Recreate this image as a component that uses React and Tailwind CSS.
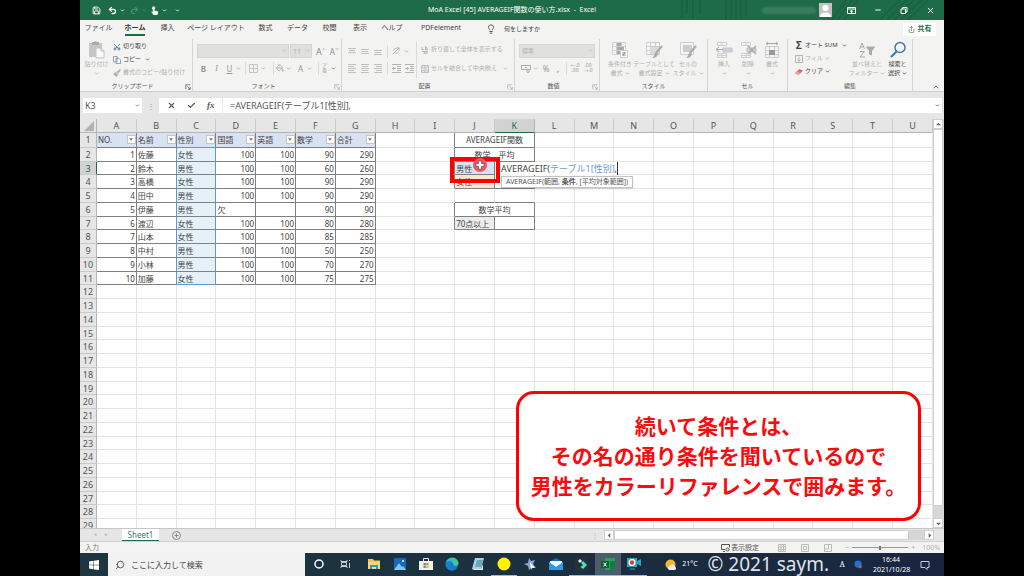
import React, { useState } from 'react';
import {
  Check,
  ChevronDown,
  ChevronUp,
  Lightbulb,
  Minus,
  PaintBucket,
  Redo2,
  Save,
  Scissors,
  Search,
  Share,
  Undo2,
  X,
} from 'lucide-react';

const TABS = [
  { label: 'ファイル', width: 'w-[37px]' },
  { label: 'ホーム', width: 'w-[36px]', active: true },
  { label: '挿入', width: 'w-[29px]' },
  { label: 'ページ レイアウト', width: 'w-[68px]' },
  { label: '数式', width: 'w-[31px]' },
  { label: 'データ', width: 'w-[33px]' },
  { label: '校閲', width: 'w-[31px]' },
  { label: '表示', width: 'w-[30px]' },
  { label: 'ヘルプ', width: 'w-[34px]' },
  { label: 'PDFelement', width: 'w-[64px]' },
];

const COLUMNS = 'ABCDEFGHIJKLMNOPQRSTU'.split('');
const HEADERS = ['NO.', '名前', '性別', '国語', '英語', '数学', '合計'];
const STUDENTS = [
  [1, '佐藤', '女性', 100, 100, 90, 290],
  [2, '鈴木', '男性', 100, 100, 60, 260],
  [3, '高橋', '女性', 100, 100, 90, 290],
  [4, '田中', '男性', 100, 100, 90, 290],
  [5, '伊藤', '男性', '欠', '', 90, 90],
  [6, '渡辺', '女性', 100, 100, 80, 280],
  [7, '山本', '女性', 100, 100, 85, 285],
  [8, '中村', '男性', 100, 100, 50, 250],
  [9, '小林', '男性', 100, 100, 70, 270],
  [10, '加藤', '女性', 100, 100, 75, 275],
];
const ROW_COUNT = 29;

const Caret = ({ className = 'text-[#aaa]' }) => (
  <ChevronDown className={`w-[5px] h-[5px] shrink-0 ${className}`} strokeWidth={4} />
);

const Launcher = ({ className = 'text-[#aaa]' }) => (
  <svg viewBox="0 0 8 8" className={`w-[6px] h-[6px] ${className}`} fill="none" stroke="currentColor">
    <path d="M1 7V1h6M3 3l4 4M7 4v3H4" />
  </svg>
);

const Divider = () => <div className="w-px h-[13px] bg-[#dadada] shrink-0" />;

const Group = ({ width, label, launcher, launcherColor, children }) => (
  <section className={`${width} shrink-0 flex flex-col border-r border-[#d5d5d5] mt-px`}>
    <div className="flex-1 min-h-0">{children}</div>
    <div className="h-[9px] flex items-center text-[6px] text-[#555]">
      <span className="flex-1 text-center">{label}</span>
      {launcher && (
        <button aria-label={`${label} の設定`} className="pr-px">
          <Launcher className={launcherColor} />
        </button>
      )}
    </div>
  </section>
);

const BigButton = ({ icon, lines, caret = true, width = 'w-[34px]', color = 'text-[#b0b0b0]' }) => (
  <button className={`${width} shrink-0 flex flex-col items-center text-[6px] leading-[9px] ${color}`}>
    {icon}
    <span className="mt-px whitespace-nowrap">{lines[0]}</span>
    <span className="flex items-center h-[9px] whitespace-nowrap">
      {lines[1]}
      {caret && <Caret className={lines[1] ? `ml-[2px] ${color}` : color} />}
    </span>
  </button>
);

const Lines = ({ rows }) => (
  <svg viewBox="0 0 9 9" className="w-[9px] h-[9px]" stroke="#c0c0c0">
    {rows.map(([x, y, w]) => (
      <path key={y} d={`M${x} ${y}h${w}`} />
    ))}
  </svg>
);

const PasteIcon = () => (
  <svg viewBox="0 0 17 18" className="w-[17px] h-[18px]">
    <path d="M1 2h13v14H1z" fill="#c9c6c9" />
    <path d="M4 1h2a2 2 0 0 1 3 0h2v3H4z" fill="#aaa" />
    <path d="M8 7h5l3 3v7H8z" fill="#fafafa" stroke="#c4c1c8" />
    <path d="M13 7v3h3" fill="none" stroke="#c4c1c8" />
  </svg>
);

const TableIcon = ({ variant }) => (
  <svg viewBox="0 0 18 18" className="w-[18px] h-[18px]" fill="none" stroke="#cfccd2">
    <path d="M1.500 1.500h13v12h-13zM1.500 5.500h13M1.500 9.500h13M5.500 1.500v12M10.500 1.500v12" fill="#f7f5f7" />
    {variant === 'cond' && (
      <>
        <path d="M6 2h4v3H6zM6 6h7v3H6zM6 10h3v3H6z" fill="#aaa7aa" stroke="none" />
        <path d="M9.500 9.500h7v7h-7z" fill="#fff" />
        <path d="M11 12h4M11 14h4M14 11l-2 4" stroke="#999" />
      </>
    )}
    {variant === 'table' && (
      <>
        <path d="M5 6h9v7H5z" fill="#dcd9dd" stroke="none" />
        <path d="M17 5l-6 7" stroke="#aaa" strokeWidth="2" />
        <path d="M11 11l2 2c-1 3-3 4-6 4 2-1 2-4 4-6z" fill="#aaa" stroke="none" />
      </>
    )}
    {variant === 'style' && (
      <>
        <path d="M2 2h12v11H2z" fill="#f7f5f7" stroke="none" />
        <path d="M4 4h9v7H4z" fill="#cfccd0" stroke="none" />
        <path d="M17 5l-6 7" stroke="#aaa" strokeWidth="2" />
        <path d="M11 11l2 2c-1 3-3 4-6 4 2-1 2-4 4-6z" fill="#aaa" stroke="none" />
      </>
    )}
  </svg>
);

const CellsIcon = ({ variant }) => (
  <svg viewBox="0 0 18 18" className="w-[18px] h-[18px]" fill="none" stroke="#cfccd2">
    {variant === 'format' ? (
      <>
        <path d="M2.500 5.500h13v11h-13zM2.500 9.500h13M2.500 13.500h13M6.500 5.500v11M11.500 5.500v11" />
        <path d="M6 9h6v5H6z" fill="#999" stroke="none" />
        <path d="M3 2.500h12M5 1L3 2.500 5 4M13 1l2 1.500L13 4" stroke="#aaa" />
      </>
    ) : (
      <>
        <path d="M2.500 1.500h9v3h-9zM7 1.500v3M2.500 12.500h9v4h-9zM7 12.500v4M2.500 14.500h9" />
        <path d="M8 7h9v4H8z" fill="#d3d0d5" stroke="#c4c0c8" />
        {variant === 'insert' && <path d="M8 8.500H1M4 6L1 8.500 4 11" stroke="#aaa" />}
        {variant === 'delete' && <path d="M9 5l8 8M17 5l-8 8" stroke="#aaa" strokeWidth="1.500" />}
      </>
    )}
  </svg>
);

const TitleBar = () => (
  <header className="relative h-5 shrink-0 bg-[#1e6b47] text-white grid grid-cols-[1fr_auto_1fr] items-center">
    <svg viewBox="0 0 300 20" className="absolute right-0 top-0 h-5 w-[300px]" stroke="#1a6341" strokeWidth="2" fill="none">
      <path d="M38 0v18M43 0v14M49 0v18M56 0v14M82 0v20M87 0v20M92 0v20M97 0v20M102 0v16" />
      <path d="M188 20l14-20M194 20l14-20M200 20l14-20M236 20l20-20M243 20l20-20M250 20l20-20M257 20l20-20M264 20l20-20" />
    </svg>
    <div className="flex items-center gap-[3px] pl-[12px]">
      <button aria-label="上書き保存" className="mr-[4px]">
        <Save className="w-[9px] h-[9px]" strokeWidth={2.5} />
      </button>
      <button aria-label="元に戻す">
        <Undo2 className="w-[9px] h-[9px]" strokeWidth={3.5} />
      </button>
      <Caret className="text-white mr-[2px]" />
      <button aria-label="やり直し">
        <Redo2 className="w-[9px] h-[9px] text-[#4c8f70]" strokeWidth={3} />
      </button>
      <Caret className="text-[#4c8f70]" />
      <button aria-label="タッチ/マウス モード">
        <svg viewBox="0 0 10 10" className="w-[9px] h-[9px]" fill="currentColor">
          <circle cx="4" cy="2.300" r="2" opacity=".8" />
          <path d="M3 2h2v3l4 1v2L8 10H4L1 6l2 1z" />
        </svg>
      </button>
      <Caret className="text-white" />
      <Caret className="text-white ml-[5px]" />
    </div>
    <h1 className="text-[7px] leading-[10px] whitespace-pre">MoA Excel [45] AVERAGEIF関数の使い方.xlsx  -  Excel</h1>
    <div className="relative flex items-center justify-end pr-[9px]">
      <div className="w-[54px] h-[7px] rounded-sm bg-[#4d8a6c] opacity-60 blur-[1px]" />
      <svg viewBox="0 0 13 14" className="w-[13px] h-[14px] ml-[3px] mr-[15px]">
        <path d="M0 0h13v14H0z" fill="#c3c3c3" />
        <circle cx="6.500" cy="5" r="3" fill="#fff" />
        <path d="M1 14c0-6 11-6 11 0z" fill="#fff" />
      </svg>
      <button aria-label="リボンの表示オプション" className="mr-[18px]">
        <svg viewBox="0 0 9 9" className="w-[9px] h-[9px]" fill="none" stroke="#fff">
          <path d="M.5 1.500h8v6h-8zM.5 3h8M4.500 7V4.500M3 5.500l1.500-1 1.500 1" />
        </svg>
      </button>
      <button aria-label="最小化" className="mr-[18px]">
        <Minus className="w-[8px] h-[8px]" strokeWidth={3} />
      </button>
      <button aria-label="元のサイズに戻す" className="mr-[18px]">
        <svg viewBox="0 0 8 8" className="w-[8px] h-[8px]" fill="none" stroke="#fff">
          <path d="M1 3h4.500v4.500H1zM2.500 3V1.500h4.500V6H5.500" />
        </svg>
      </button>
      <button aria-label="閉じる">
        <X className="w-[9px] h-[9px]" strokeWidth={2.5} />
      </button>
    </div>
  </header>
);

const TabBar = () => (
  <nav className="h-[18px] shrink-0 flex items-center text-[7px] leading-[10px] text-[#444] pr-[8px]">
    {TABS.map((tab) => (
      <button key={tab.label} className={`${tab.width} h-full shrink-0 flex flex-col items-center justify-end pb-[2px]`}>
        <span className={`whitespace-nowrap ${tab.active ? 'font-bold text-[#333]' : ''}`}>{tab.label}</span>
        <span className={`mt-px w-[20px] h-[2px] ${tab.active ? 'bg-[#1e6b47]' : 'bg-transparent'}`} />
      </button>
    ))}
    <Lightbulb className="w-[10px] h-[10px] ml-[13px]" strokeWidth={2} />
    <button className="ml-[8px] text-[6px]">何をしますか</button>
    <button className="ml-auto h-[13px] w-[33px] bg-white flex items-center justify-center gap-[3px] font-bold text-[#1e6b47]">
      <Share className="w-[7px] h-[7px]" strokeWidth={2} />
      共有
    </button>
  </nav>
);

const Ribbon = () => (
  <div className="h-[54px] shrink-0 flex text-[6px] leading-[9px] text-[#b0b0b0] border-b border-[#cfcfcf]">
    <Group width="w-[113px]" label="クリップボード" launcher launcherColor="text-[#555]">
      <div className="flex pt-[2px]">
        <BigButton icon={<PasteIcon />} lines={['貼り付け', '']} width="w-[33px]" />
        <div className="flex flex-col items-start gap-[4px] pt-px">
          <button className="flex items-center gap-[2px] text-[#444]">
            <Scissors className="w-[8px] h-[8px] -rotate-90 text-[#47759c]" strokeWidth={2.5} />
            切り取り
          </button>
          <button className="flex items-center gap-[2px] text-[#444]">
            <svg viewBox="0 0 9 9" className="w-[8px] h-[8px]" fill="#fff" stroke="#7c8fa3">
              <path d="M.5.500h4v6h-4zM3.500 2.500h3l2 2v4h-5z" />
            </svg>
            コピー
            <Caret className="text-[#555] ml-[2px]" />
          </button>
          <button className="flex items-center gap-[2px] whitespace-nowrap">
            <svg viewBox="0 0 9 9" className="w-[8px] h-[8px]" fill="#b4b4b4">
              <path d="M8 0l1 1-3 4-2-2zM3 3l3 3-2 3-4-3z" />
            </svg>
            書式のコピー/貼り付け
          </button>
        </div>
      </div>
    </Group>

    <Group width="w-[149px]" label="フォント" launcher>
      <div className="flex items-center pl-[4px] pt-[5px] gap-px">
        <div className="relative w-[92px]">
          <select aria-label="フォント" className="appearance-none w-full h-[14px] bg-[#e1e0dc] border border-[#d6d5d1] block">
            <option></option>
          </select>
          <Caret className="absolute right-[2px] top-[4px] text-[#b8b8b8]" />
        </div>
        <div className="relative w-[22px]">
          <select aria-label="フォント サイズ" className="appearance-none w-full h-[14px] pl-[2px] bg-[#e1e0dc] border border-[#d6d5d1] text-[7px] block" defaultValue="11">
            <option>11</option>
          </select>
          <Caret className="absolute right-[2px] top-[4px] text-[#b8b8b8]" />
        </div>
        <button aria-label="フォント サイズの拡大" className="ml-[3px] flex text-[9px] text-[#8d8d8d]">
          A<ChevronUp className="w-[4px] h-[4px]" strokeWidth={4} />
        </button>
        <button aria-label="フォント サイズの縮小" className="ml-[3px] flex text-[8px] text-[#8d8d8d]">
          A<ChevronDown className="w-[4px] h-[4px]" strokeWidth={4} />
        </button>
      </div>
      <div className="flex items-center pl-[7px] pt-[3px] text-[8px] text-[#999] h-[17px]">
        <button className="w-[7px] font-bold">B</button>
        <button className="w-[7px] ml-[6px] italic font-serif">I</button>
        <button className="w-[7px] ml-[6px] mr-[3px] underline">U</button>
        <Caret />
        <div className="w-[4px]" />
        <Divider />
        <svg viewBox="0 0 9 9" className="w-[9px] h-[9px] mx-[3px]" fill="none" stroke="#c5c2c8">
          <path d="M.5.500h8v8h-8zM4.500.500v8M.5 4.500h8" />
        </svg>
        <Caret />
        <div className="w-[7px]" />
        <Divider />
        <PaintBucket className="w-[8px] h-[8px] mx-[2px]" strokeWidth={2} />
        <Caret />
        <button className="w-[7px] ml-[6px] mr-[3px]">A</button>
        <Caret />
        <div className="w-[6px]" />
        <Divider />
        <button className="ml-[3px] mr-[4px] text-[5px] leading-[5px] w-[5px]">ア亜</button>
        <Caret className="text-[#666]" />
      </div>
    </Group>

    <Group width="w-[173px]" label="配置" launcher>
      <div className="flex h-full">
        <div className="flex flex-col w-[73px]">
          <div className="flex items-center gap-[4px] pl-[6px] pt-[5px] h-[19px]">
            <Lines rows={[[0, 1.5, 8], [1, 3.5, 6], [0, 5.5, 8]]} />
            <Lines rows={[[0, 2.5, 8], [1, 4.5, 6], [0, 6.5, 8]]} />
            <Lines rows={[[0, 3.5, 8], [1, 5.5, 6], [0, 7.5, 8]]} />
            <Divider />
            <svg viewBox="0 0 9 9" className="w-[8px] h-[8px]" fill="none" stroke="#aaa">
              <path d="M1 8l7-7M2 4a2 2 0 0 1 3-2M4 7a2 2 0 0 0 3-2M5 1h3v3" />
            </svg>
            <Caret />
          </div>
          <div className="flex items-center gap-[4px] pl-[6px] pt-[3px] h-[17px]">
            <Lines rows={[[0, 0.5, 8], [0, 2.5, 6], [0, 4.5, 8], [0, 6.5, 6], [0, 8.5, 8]]} />
            <Lines rows={[[0, 0.5, 8], [1, 2.5, 6], [0, 4.5, 8], [1, 6.5, 6], [0, 8.5, 8]]} />
            <Lines rows={[[0, 0.5, 8], [2, 2.5, 6], [0, 4.5, 8], [2, 6.5, 6], [0, 8.5, 8]]} />
            <Divider />
            <svg viewBox="0 0 9 9" className="w-[9px] h-[9px] shrink-0" fill="none" stroke="#b4b4b4">
              <path d="M0 .500h9M5 2.500h4M5 4.500h4M5 6.500h4M0 8.500h9M4 4.500H0M2 3L.500 4.500 2 6" />
            </svg>
            <svg viewBox="0 0 9 9" className="w-[9px] h-[9px] shrink-0" fill="none" stroke="#b4b4b4">
              <path d="M0 .500h9M5 2.500h4M5 4.500h4M5 6.500h4M0 8.500h9M0 4.500h4M2 3l1.500 1.500L2 6" />
            </svg>
          </div>
        </div>
        <div className="flex flex-col gap-[10px] border-l border-[#dadada] ml-px mt-[3px] mb-[4px] pl-[4px] pt-[3px] whitespace-nowrap">
          <button className="flex items-center gap-[2px]">
            <svg viewBox="0 0 9 9" className="w-[8px] h-[8px]" fill="none" stroke="#aaa">
              <path d="M1 1v3h2M5 0v4h2V2H5M1 6h6v2H3M4 7L3 8l1 1" />
            </svg>
            折り返して全体を表示する
          </button>
          <button className="flex items-center gap-[2px]">
            <svg viewBox="0 0 9 9" className="w-[8px] h-[8px]" fill="none" stroke="#b9b6c0">
              <path d="M.5.500h8v8h-8zM.5 2.500h8M.5 6.500h8M4.500.500v2M4.500 6.500v2M2 4.500h5" />
            </svg>
            セルを結合して中央揃え
            <Caret className="ml-[4px]" />
          </button>
        </div>
      </div>
    </Group>

    <Group width="w-[85px]" label="数値" launcher>
      <div className="relative mx-[4px] pt-[5px]">
        <select aria-label="表示形式" className="appearance-none w-full h-[14px] pl-[2px] bg-[#e1e0dc] border border-[#d6d5d1] block">
          <option>標準</option>
        </select>
        <Caret className="absolute right-[2px] top-[9px] text-[#b8b8b8]" />
      </div>
      <div className="flex items-center pl-[6px] pt-[3px] h-[17px] text-[8px] text-[#999]">
        <svg viewBox="0 0 10 9" className="w-[10px] h-[9px] mr-[2px]" fill="none" stroke="#aaa">
          <path d="M.5 1.500h9v4h-9zM4 3.500h2M5 7h4M6 8.500h2" />
        </svg>
        <Caret />
        <button className="ml-[4px] w-[8px]">%</button>
        <button className="ml-[6px] mr-[6px] w-[4px] font-bold">,</button>
        <Divider />
        <button aria-label="小数点以下の表示桁数を増やす" className="ml-[3px] text-[5px] leading-[5px] w-[10px]">←.0 .00</button>
        <button aria-label="小数点以下の表示桁数を減らす" className="ml-[3px] text-[5px] leading-[5px] w-[10px]">.00 →.0</button>
      </div>
    </Group>

    <Group width="w-[108px]" label="スタイル">
      <div className="flex pt-[2px] pl-[3px]">
        <BigButton icon={<TableIcon variant="cond" />} lines={['条件付き', '書式']} />
        <BigButton icon={<TableIcon variant="table" />} lines={['テーブルとして', '書式設定']} />
        <BigButton icon={<TableIcon variant="style" />} lines={['セルの', 'スタイル']} />
      </div>
    </Group>

    <Group width="w-[80px]" label="セル">
      <div className="flex pt-[2px] pl-[4px]">
        <BigButton width="w-[24px]" icon={<CellsIcon variant="insert" />} lines={['挿入', '']} />
        <BigButton width="w-[24px]" icon={<CellsIcon variant="delete" />} lines={['削除', '']} />
        <BigButton width="w-[24px]" icon={<CellsIcon variant="format" />} lines={['書式', '']} />
      </div>
    </Group>

    <Group width="w-[125px]" label="編集">
      <div className="flex pt-[2px]">
        <div className="w-[63px] pl-[7px] flex flex-col items-start gap-[4px] whitespace-nowrap">
          <button className="flex items-center gap-[2px] text-[#444]">
            <b className="text-[10px] w-[8px]">Σ</b>
            オート SUM
            <Caret className="text-[#555] ml-[2px]" />
          </button>
          <button className="flex items-center gap-[2px]">
            <svg viewBox="0 0 9 9" className="w-[8px] h-[8px]" fill="none" stroke="#aaa">
              <path d="M.5.500h8v8h-8zM4.500 2v5M2.500 5l2 2 2-2" />
            </svg>
            フィル
            <Caret />
          </button>
          <button className="flex items-center gap-[2px] text-[#444]">
            <svg viewBox="0 0 9 9" className="w-[8px] h-[8px]">
              <path d="M5 1l4 2-5 5-4-2z" fill="#e2686b" />
              <path d="M0 6l4 2 2-2-4-2z" fill="#f0a0a2" />
            </svg>
            クリア
            <Caret className="text-[#555]" />
          </button>
        </div>
        <BigButton
          width="w-[32px]"
          icon={
            <svg viewBox="0 0 18 18" className="w-[18px] h-[18px]" fill="none" stroke="#aaa">
              <path d="M1.500 8l2.500-6 2.500 6M2.500 6h3M2 10.500h4.500L2 16h5" />
              <path d="M8.500 6h8l-3 4v4l-2-1v-3z" fill="#aaa" />
            </svg>
          }
          lines={['並べ替えと', 'フィルター']}
        />
        <BigButton
          width="w-[29px]"
          color="text-[#444]"
          icon={
            <svg viewBox="0 0 18 18" className="w-[18px] h-[18px]" fill="none" stroke="#3d78b5">
              <circle cx="11" cy="6.500" r="5" strokeWidth="1.500" />
              <path d="M7.500 10.500L2 16" strokeWidth="2.200" />
            </svg>
          }
          lines={['検索と', '選択']}
        />
      </div>
    </Group>
    <button aria-label="リボンを折りたたむ" className="flex-1 flex items-end justify-end pr-[4px]">
      <ChevronUp className="w-[8px] h-[8px] text-[#555]" strokeWidth={2} />
    </button>
  </div>
);

const FormulaBar = ({ formula, setFormula }) => (
  <div className="h-[27px] shrink-0 bg-[#e6e6e6] flex items-center pl-[3px] pr-[2px] text-[8px] text-[#555]">
    <div className="w-[59px] h-[15px] bg-white flex items-center pr-[2px]">
      <input aria-label="名前ボックス" defaultValue="K3" className="w-full min-w-0 pl-[2px] text-[9px] outline-none" />
      <Caret className="text-[#777]" />
    </div>
    <span className="w-[17px] text-center text-[#999]">⋮</span>
    <div className="w-[63px] h-[15px] bg-white flex items-center justify-around px-[2px]">
      <button aria-label="キャンセル"><X className="w-[9px] h-[9px]" strokeWidth={3} /></button>
      <button aria-label="入力"><Check className="w-[9px] h-[9px]" strokeWidth={3} /></button>
      <button aria-label="関数の挿入" className="font-['Liberation_Serif',serif] italic font-bold text-[9px]">fx</button>
    </div>
    <div className="flex-1 ml-px h-[15px] bg-white flex items-center pr-[2px]">
      <input
        aria-label="数式バー"
        value={formula}
        onChange={(e) => setFormula(e.target.value)}
        className="flex-1 min-w-0 pl-[7px] text-[9px] outline-none"
      />
      <Caret className="text-[#555]" />
    </div>
  </div>
);

const DARK = 'border-[#808080]';
const LIGHT = 'border-[#e4e4e4]';

const studentCells = (row) =>
  STUDENTS[row - 2].map((value, i) => {
    let look = 'border-b-[#808080] border-r-[#808080]';
    if (i === 1) look = 'border-b-[#808080] border-r-[#5b9bd5]';
    if (i === 2) look = `bg-[#e6f0f9] border-r-[#5b9bd5] ${row === 11 ? 'border-b-[#5b9bd5]' : 'border-b-[#808080]'}`;
    return (
      <td key={i} className={`border-r border-b ${look} ${typeof value === 'number' ? 'text-right pr-px' : 'pl-px'}`}>
        {value}
      </td>
    );
  });

const SummaryCells = ({ row, formula }) => {
  if (row === 1 || row === 2 || row === 6) {
    const text = { 1: 'AVERAGEIF関数', 2: '数学　平均', 6: '数学平均' }[row];
    return <td colSpan={2} className={`border-r border-b text-center ${DARK}`}>{text}</td>;
  }
  if (row === 3) {
    return (
      <>
        <td className={`relative border-r border-b bg-[#dae3f3] pl-px ${DARK}`}>
          男性
          <div className="absolute z-20 -left-[5px] -top-[5px] w-[50px] h-[26px] border-4 border-[#f00]" />
          <svg viewBox="0 0 14 14" className="absolute z-20 left-[18px] -top-[4px] w-[14px] h-[14px]">
            <circle cx="7" cy="7" r="7" fill="#f0585c" />
            <path d="M5.500 3h3v2.500H11v3H8.500V11h-3V8.500H3v-3h2.500z" fill="#fff" stroke="#444" strokeWidth=".6" />
          </svg>
        </td>
        <td className="relative border-r border-b border-[#3f8f68]">
          <div className="absolute z-10 left-0 top-0 h-[13px] bg-white whitespace-nowrap text-[9px] leading-[13px] pl-px border-r border-[#333]">
            {formula.slice(0, 11)}
            <span className="text-[#6f9bd1]">{formula.slice(11, -1)}</span>
            {formula.slice(-1)}
          </div>
          <div className="absolute z-10 left-[6px] top-[14px] h-[12px] px-[4px] bg-white border border-[#c4c4c4] shadow-sm whitespace-nowrap text-[7px] leading-[10px] text-[#555]">
            AVERAGEIF(範囲, <b>条件</b>, [平均対象範囲])
          </div>
        </td>
      </>
    );
  }
  if (row === 4) {
    return (
      <>
        <td className={`border-r border-b bg-[#fbe5d6] pl-px ${DARK}`}>女性</td>
        <td className={`border-r border-b ${DARK}`} />
      </>
    );
  }
  if (row === 7) {
    return (
      <>
        <td className={`border-r border-b bg-[#ededed] pl-px whitespace-nowrap ${DARK}`}>70点以上</td>
        <td className={`border-r border-b ${DARK}`} />
      </>
    );
  }
  const bottom = row === 5 ? 'border-b-[#808080] border-r-[#e4e4e4]' : LIGHT;
  return (
    <>
      <td className={`border-r border-b ${bottom}`} />
      <td className={`border-r border-b ${bottom}`} />
    </>
  );
};

const Sheet = ({ formula }) => (
  <table className="w-full h-[414px] table-fixed border-separate border-spacing-0 text-[8px] leading-[11px] text-[#444]">
    <thead>
      <tr className="h-[14px] bg-[#e6e6e6] text-[9px] text-[#555]">
        <th className="w-[17px] border-r border-b border-[#b5b5b5] p-0">
          <svg viewBox="0 0 16 13" className="w-[16px] h-[13px] block">
            <path d="M14 2v10H4z" fill="#b3b3b3" />
          </svg>
        </th>
        {COLUMNS.map((col) => (
          <th
            key={col}
            scope="col"
            className={`font-normal border-r border-b ${
              col === 'K' ? 'bg-[#d2d2d2] text-[#1e6b47] border-r-[#b5b5b5] border-b-[#1e6b47]' : 'border-r-[#cacaca] border-b-[#b5b5b5]'
            }`}
          >
            {col}
          </th>
        ))}
      </tr>
    </thead>
    <tbody>
      {Array.from({ length: ROW_COUNT }, (_, i) => i + 1).map((row) => (
        <tr key={row}>
          <th
            scope="row"
            className={`font-normal text-[9px] border-r border-b ${
              row === 3 ? 'bg-[#d2d2d2] text-[#1e6b47] border-b-[#cacaca] border-r-[#1e6b47]' : 'bg-[#e6e6e6] text-[#555] border-b-[#cacaca] border-r-[#b5b5b5]'
            }`}
          >
            {row}
          </th>
          {row === 1 &&
            HEADERS.map((name, i) => (
              <td key={name} className={`border-r border-b bg-[#d9e2f3] pl-px ${i === 2 ? 'border-r-[#808080] border-b-[#5b9bd5]' : DARK}`}>
                <div className="flex items-center justify-between h-[12px]">
                  {name}
                  <button aria-label={`${name} フィルター`} className="w-[9px] h-[9px] bg-white border border-[#c6c6c6] flex items-center justify-center">
                    <svg viewBox="0 0 5 3" className="w-[4px] h-[3px]"><path d="M0 0h5L2.500 3z" fill="#777" /></svg>
                  </button>
                </div>
              </td>
            ))}
          {row >= 2 && row <= 11 && studentCells(row)}
          {row > 11 && HEADERS.map((name) => <td key={name} className={`border-r border-b ${LIGHT}`} />)}
          <td className={`border-r border-b ${LIGHT}`} />
          <td
            className={`border-r border-b ${
              row <= 4 || row === 6 || row === 7 ? 'border-r-[#808080] border-b-[#e4e4e4]' : LIGHT
            }`}
          />
          <SummaryCells row={row} formula={formula} />
          {COLUMNS.slice(11).map((col) => (
            <td key={col} className={`border-r border-b ${LIGHT}`} />
          ))}
        </tr>
      ))}
    </tbody>
  </table>
);

const ScrollArrow = ({ label, d }) => (
  <button aria-label={label} className="w-[10px] h-[10px] shrink-0 bg-white border border-[#cfcfcf] flex items-center justify-center">
    <svg viewBox="0 0 6 6" className="w-[5px] h-[5px]"><path d={d} fill="#666" /></svg>
  </button>
);

const SheetTabs = () => (
  <div className="h-[13px] shrink-0 bg-[#e6e6e6] border-t border-[#c6c6c6] flex items-center text-[#b0b0b0]">
    <span className="w-[42px] flex justify-center gap-[8px] text-[5px]">
      <button aria-label="前のシート">◂</button>
      <button aria-label="次のシート">▸</button>
    </span>
    <button className="w-[37px] h-[12px] self-start bg-white border-b border-[#1e6b47] text-[8px] leading-[10px] text-[#3c7d5e]">Sheet1</button>
    <button aria-label="新しいシート" className="ml-[13px]">
      <svg viewBox="0 0 9 9" className="w-[9px] h-[9px] block" fill="none" stroke="#888">
        <circle cx="4.500" cy="4.500" r="4" />
        <path d="M4.500 2.500v4M2.500 4.500h4" />
      </svg>
    </button>
    <span className="ml-auto mr-[5px] text-[8px] leading-[10px]">⋮</span>
    <div className="flex w-[330px]">
      <ScrollArrow label="左へ" d="M4 0v6L1 3z" />
      <div className="flex-1 flex bg-[#d6d6d6]">
        <div className="w-[95%] h-[10px] bg-white border border-[#cfcfcf]" />
      </div>
      <ScrollArrow label="右へ" d="M2 0v6l3-3z" />
    </div>
    <div className="w-[10px]" />
  </div>
);

const StatusBar = ({ zoom, setZoom }) => (
  <footer className="h-[12px] shrink-0 bg-[#f3f3f1] border-t border-[#d0d0d0] flex items-center text-[7px] leading-[10px] text-[#777] pl-[5px] pr-[4px]">
    <span>入力</span>
    <button className="ml-auto flex items-center gap-px text-[#555] mr-[19px]">
      <svg viewBox="0 0 9 8" className="w-[9px] h-[8px]" fill="none" stroke="currentColor">
        <path d="M4 5.500H.500v-5h8v3M2 7.500h2" />
        <circle cx="6.500" cy="5.500" r="1.500" />
      </svg>
      表示設定
    </button>
    <svg viewBox="0 0 8 8" className="w-[8px] h-[8px] mr-[15px]" fill="none" stroke="#bbb">
      <path d="M.5.500h7v7h-7zM3 .500v7M5.500.500v7M.5 3h7M.5 5.500h7" />
    </svg>
    <svg viewBox="0 0 8 8" className="w-[8px] h-[8px] mr-[15px]" fill="none" stroke="#bbb">
      <path d="M.5.500h7v7h-7zM2.500 2.500h3v3h-3z" />
    </svg>
    <svg viewBox="0 0 8 8" className="w-[8px] h-[8px] mr-[13px]" fill="none" stroke="#bbb">
      <path d="M.5.500h7v7h-7zM.5 5h4V.500" />
    </svg>
    <span className="text-[#aaa]">−</span>
    <input
      type="range"
      aria-label="ズーム"
      min="0"
      max="200"
      value={zoom}
      onChange={(e) => setZoom(e.target.value)}
      className="appearance-none w-[56px] h-px mx-[3px] bg-[#999] [&::-webkit-slider-thumb]:appearance-none [&::-webkit-slider-thumb]:w-[2px] [&::-webkit-slider-thumb]:h-[4px] [&::-webkit-slider-thumb]:bg-[#777]"
    />
    <span className="text-[#aaa]">+</span>
    <span className="ml-[7px] text-[#b5b5b5]">{zoom}%</span>
  </footer>
);

const TaskIcon = ({ label, open, active, children }) => (
  <button
    aria-label={label}
    className={`w-[26px] h-full shrink-0 flex items-center justify-center border-b ${open ? 'border-[#8fc0e0]' : 'border-transparent'} ${active ? 'bg-[#4d5d6a]' : ''}`}
  >
    <svg viewBox="0 0 14 14" className="w-[14px] h-[14px]">{children}</svg>
  </button>
);

const Taskbar = () => (
  <div className="relative h-[23px] shrink-0 flex items-center bg-linear-to-r from-[#1d3641] via-[#1c303f] to-[#192540] text-white">
    <button aria-label="スタート" className="w-[28px] flex justify-center">
      <svg viewBox="0 0 10 10" className="w-[10px] h-[10px]" fill="#fff">
        <path d="M0 1.500l4.500-.700v4H0zM5 .700L10 0v4.800H5zM0 5.300h4.500v4L0 8.600zM5 5.300h5V10L5 9.400z" />
      </svg>
    </button>
    <label className="w-[197px] h-full bg-[#f2f2f2] flex items-center gap-[6px] pl-[7px] text-[#444]">
      <Search className="w-[10px] h-[10px] -scale-x-100" strokeWidth={2} />
      <input aria-label="検索" placeholder="ここに入力して検索" className="flex-1 min-w-0 outline-none text-[8px] leading-[12px] placeholder:text-[#444]" />
    </label>
    <div className="flex items-center h-full pl-px pr-[3px]">
      <TaskIcon label="Cortana"><circle cx="7" cy="7" r="4" fill="none" stroke="#fff" strokeWidth="1.500" /></TaskIcon>
      <TaskIcon label="タスク ビュー">
        <path d="M3 3v1.500h6V3M3 11V9.500h6V11M3.500 5.500h5v3h-5zM11.500 3v1M11.500 6v5" fill="none" stroke="#c5ccd0" />
      </TaskIcon>
    </div>
    <TaskIcon label="エクスプローラー">
      <path d="M1 2h5l1 1.500h6V12H1z" fill="#f7c64a" />
      <path d="M1 5h12v7H1z" fill="#fbd96f" />
      <path d="M3 12V8h8v4H9v-2H5v2z" fill="#3f8fd6" />
    </TaskIcon>
    <TaskIcon label="フォト">
      <path d="M1 1h12v12H1z" fill="#1668b8" />
      <path d="M1 13l5-7 3 4 1-1 3 4z" fill="#7ec8f2" />
      <circle cx="10" cy="4" r="1" fill="#fff" />
    </TaskIcon>
    <TaskIcon label="Microsoft Store">
      <path d="M4.500 4V1.500h5V4" fill="none" stroke="#e8e8e8" />
      <path d="M0 4h14v9H0z" fill="#f1f1f1" />
      <path d="M4.500 6h2.300v2.300H4.500z" fill="#e5532d" />
      <path d="M7.200 6h2.300v2.300H7.200z" fill="#7db72f" />
      <path d="M4.500 8.700h2.300V11H4.500z" fill="#2f9fe0" />
      <path d="M7.200 8.700h2.300V11H7.200z" fill="#f5b81f" />
    </TaskIcon>
    <TaskIcon label="Edge">
      <circle cx="7" cy="7" r="6.500" fill="#1678c8" />
      <path d="M1 5c2-6 12-6 12.500 1.500C13.500 9 9 9.500 8.500 8 9 5 5 3 1 5z" fill="#45c98a" />
      <path d="M1 5c4-2 7 0 7 3-1-2-3-1-3 1 0 3 3 4 6 3-3 2.500-8 2-10-2C.5 8 .5 6.500 1 5z" fill="#1b7fd0" />
      <path d="M1 5c3-4 8-3 8.500 1C7 3.500 4 3.500 1 5z" fill="#2bb5e0" />
    </TaskIcon>
    <TaskIcon label="メモ帳">
      <path d="M4 1h9l-3 11H1z" fill="#a9d3de" />
      <path d="M6 3h6l-2 7H4z" fill="#6ba6b8" />
      <path d="M1 12l9 0 2-5v6H3z" fill="#dfe8ea" />
    </TaskIcon>
    <TaskIcon label="付箋" open><circle cx="7" cy="7" r="6.500" fill="#fff200" /></TaskIcon>
    <TaskIcon label="ペイント">
      <path d="M6 1l2 3 4-1-2 4 3 4-4-1-3 3-1-4-4-2 4-1z" fill="#8ba6dd" />
      <path d="M7 5l5 6H9l-1 2z" fill="#fff" />
    </TaskIcon>
    <TaskIcon label="メール">
      <path d="M0 5l7-4 7 4v8H0z" fill="#1470bf" />
      <path d="M1 4h12v3L7 10 1 7z" fill="#f4f8fb" />
      <path d="M0 5l7 5 7-5v8H0z" fill="#2b9be8" />
    </TaskIcon>
    <TaskIcon label="Filmora" open>
      <path d="M0 0h14v14H0z" fill="#263238" />
      <path d="M5 2l2 2-2 2-2-2z" fill="#d9fff5" />
      <path d="M8 4l4 4-4 4-2.500-2L8 8 6 6z" fill="#4fe0c0" />
    </TaskIcon>
    <TaskIcon label="Excel" open active>
      <path d="M4 1h10v12H4z" fill="#21a366" />
      <path d="M9 4h5v9H9z" fill="#107c41" />
      <path d="M0 4h8v7H0z" fill="#0e5c30" />
      <path d="M2.500 5.500l3 4M5.500 5.500l-3 4" stroke="#fff" />
    </TaskIcon>
    <TaskIcon label="レコーダー" open>
      <path d="M0 1h10v9H0zM10 4l4-2v7l-4-2z" fill="#2ea3c4" />
      <circle cx="5" cy="5.500" r="3.500" fill="#fff" />
      <circle cx="5" cy="5.500" r="2.200" fill="#e2393c" />
      <path d="M3 12h5" stroke="#2ea3c4" />
    </TaskIcon>
    <button className="ml-auto flex items-center gap-[5px] text-[7px] mr-[142px]">
      <svg viewBox="0 0 12 12" className="w-[12px] h-[12px]">
        <circle cx="5.500" cy="5.500" r="5" fill="#f7b52c" />
        <path d="M4 11a2.500 2.500 0 0 1 1-4.500 3 3 0 0 1 5 1 2 2 0 0 1 0 3.500z" fill="#e9eef2" />
      </svg>
      21°C
    </button>
    <span className="font-serif text-[9px] mr-[9px]">A</span>
    <svg viewBox="0 0 10 10" className="w-[9px] h-[9px] mr-[10px] shrink-0">
      <circle cx="4.500" cy="4.500" r="4" fill="#1e6fd6" />
      <circle cx="7" cy="7.500" r="1.800" fill="#e04a3a" />
    </svg>
    <div className="w-[36px] text-center text-[7px] leading-[10px] shrink-0">
      <div>16:44</div>
      <div>2021/10/28</div>
    </div>
    <button aria-label="通知" className="ml-[11px] mr-[14px]">
      <svg viewBox="0 0 10 10" className="w-[10px] h-[10px]" fill="none" stroke="#c5ccd0">
        <path d="M1 1.500h8v6H7v2l-2-2H1z" />
      </svg>
    </button>
    <div className="absolute right-[115px] inset-y-0 flex items-center text-[19px] leading-[23px] text-[#dfe3e8] whitespace-nowrap">© 2021 saym.</div>
  </div>
);

const App = () => {
  const [formula, setFormula] = useState('=AVERAGEIF(テーブル1[性別],');
  const [zoom, setZoom] = useState(100);

  return (
    <div className="h-screen bg-black px-20">
      <div className="h-full flex flex-col bg-[#f3f3f1] font-['Noto_Sans','Noto_Sans_CJK_JP',sans-serif]">
        <TitleBar />
        <TabBar />
        <Ribbon />
        <FormulaBar formula={formula} setFormula={setFormula} />
        <main className="relative flex-1 min-h-0 flex bg-[#e6e6e6]">
          <div className="flex-1 min-w-0 overflow-hidden bg-white">
            <Sheet formula={formula} />
          </div>
          <div className="w-[11px] flex flex-col bg-[#d6d6d6]">
            <ScrollArrow label="上へ" d="M0 4h6L3 1z" />
            <div className="h-[377px] w-[10px] bg-white border border-[#cfcfcf]" />
            <div className="flex-1" />
            <ScrollArrow label="下へ" d="M0 2h6L3 5z" />
          </div>
          <div className="absolute z-30 right-[23px] bottom-[7px] w-[405px] h-[130px] bg-white border-[3px] border-[#f00] rounded-[18px] flex flex-col items-center justify-center text-[21px] leading-[30px] font-bold text-[#f80c10] whitespace-nowrap">
            <p>続いて条件とは、</p>
            <p>その名の通り条件を聞いているので</p>
            <p>男性をカラーリファレンスで囲みます。</p>
          </div>
        </main>
        <SheetTabs />
        <StatusBar zoom={zoom} setZoom={setZoom} />
        <Taskbar />
      </div>
    </div>
  );
};

export default App;
